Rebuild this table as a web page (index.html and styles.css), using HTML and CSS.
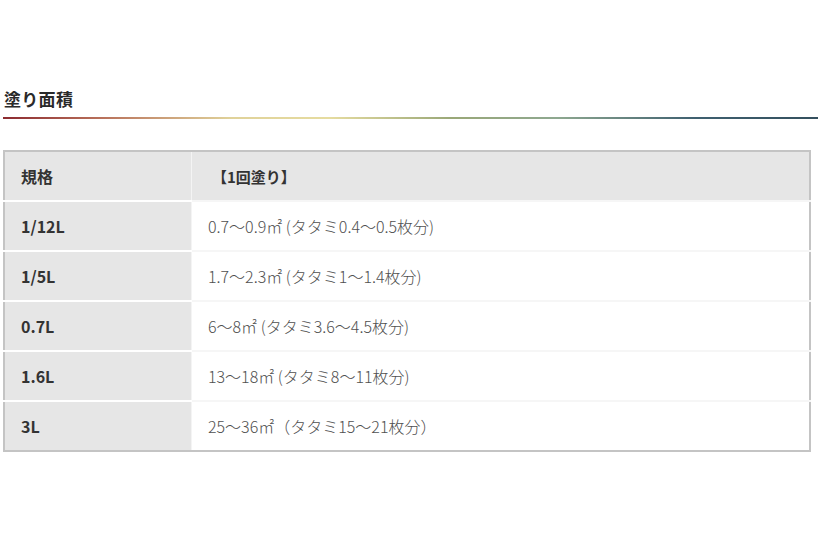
FILE: index.html
```html
<!DOCTYPE html>
<html lang="ja">
<head>
<meta charset="utf-8">
<link rel="stylesheet" href="styles.css">
</head>
<body>
<section class="area">
  <h2 class="title">塗り面積</h2>
  <div class="rule"></div>
  <table class="spec">
    <tr class="head"><th>規格</th><td>【1回塗り】</td></tr>
    <tr><th>1/12L</th><td>0.7～0.9㎡ (タタミ0.4～0.5枚分)</td></tr>
    <tr><th>1/5L</th><td>1.7～2.3㎡ (タタミ1～1.4枚分)</td></tr>
    <tr><th>0.7L</th><td>6～8㎡ (タタミ3.6～4.5枚分)</td></tr>
    <tr><th>1.6L</th><td>13～18㎡ (タタミ8～11枚分)</td></tr>
    <tr><th>3L</th><td>25～36㎡（タタミ15～21枚分）</td></tr>
  </table>
</section>
</body>
</html>
```
FILE: styles.css
```css
html, body { margin: 0; padding: 0; background: #fff; }
body { font-family: "Noto Sans CJK JP", "Noto Sans", sans-serif; color: #333; }
.area { padding: 87px 0 0 3px; }
.title { margin: 0 0 0 1px; font-size: 17px; font-weight: 700; line-height: 24px; color: #2a2a2a; letter-spacing: 0.3px; }
.rule { height: 2px; margin-top: 6px; background: linear-gradient(90deg, #8c2a30 0%, #b8705a 12%, #e0d29a 28%, #e6dca0 40%, #9aa878 55%, #8ea890 68%, #3f6070 85%, #34505e 100%); }
.spec { margin-top: 31px; width: 808px; border-collapse: collapse; border: 2px solid #c4c4c4; font-size: 16px; }
.spec th, .spec td { height: 48px; padding: 0 0 0 16px; text-align: left; vertical-align: middle; border-top: 2px solid #fff; }
.spec tr:first-child th, .spec tr:first-child td { border-top: 0; }
.spec th { width: 170px; background: #e6e6e6; font-weight: 700; color: #333; border-right: 1px solid #f4f4f4; }
.spec td { background: #fff; color: #505050; font-weight: 300; border-top: 2px solid #f6f6f6; }
.spec .head td { background: #e6e6e6; font-weight: 700; color: #333; padding-left: 20px; font-size: 15px; }
```
